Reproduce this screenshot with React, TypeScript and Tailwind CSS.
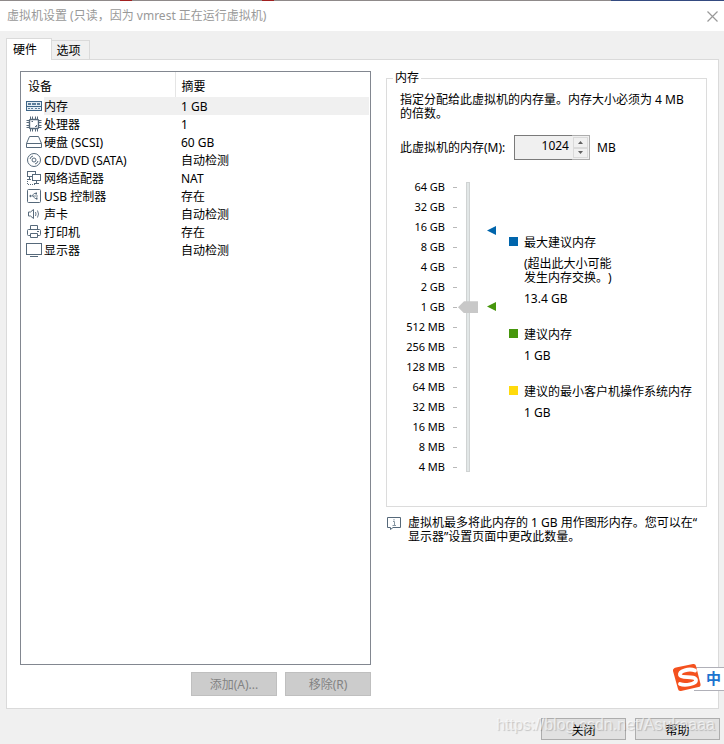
import type { ReactNode } from "react";

const steel = "#56697a";

function Icon({ children }: { children: ReactNode }) {
  return (
    <svg width="16" height="16" viewBox="0 0 16 16" fill="none" stroke={steel} className="block shrink-0" aria-hidden="true">
      {children}
    </svg>
  );
}

const MemoryIcon = () => (
  <Icon>
    <g shapeRendering="crispEdges">
      <rect x="0.5" y="3.5" width="15" height="9" fill="#e4edf4" stroke="#3d6587" />
      <rect x="2" y="5" width="3" height="2" fill="#5d7f9c" stroke="none" />
      <rect x="6" y="5" width="4" height="2" fill="#5d7f9c" stroke="none" />
      <rect x="11" y="5" width="3" height="2" fill="#5d7f9c" stroke="none" />
      <path d="M1 8.5H15" stroke="#3d6587" />
      <path d="M2 10.5H8M9 10.5H14" stroke="#5d7f9c" strokeDasharray="2 1" />
    </g>
  </Icon>
);
const CpuIcon = () => (
  <Icon>
    <rect x="3.5" y="3.5" width="9" height="9" rx="1" strokeWidth="1.4" />
    <path d="M4.5 0.500V3M6.500 0.500V3M9.500 0.500V3M11.500 0.500V3M4.500 13V15.500M6.500 13V15.500M9.500 13V15.500M11.500 13V15.500M0.500 4.500H3M0.500 6.500H3M0.500 9.500H3M0.500 11.500H3M13 4.500H15.500M13 6.500H15.500M13 9.500H15.500M13 11.500H15.500" />
    <path d="M5.500 5.500H7M10.500 9V10.500H9" />
  </Icon>
);
const DiskIcon = () => (
  <Icon>
    <path d="M3.5 2.5H12.5L15.5 9.5V13.5H0.5V9.5ZM0.5 9.5H15.5" />
  </Icon>
);
const DiscIcon = () => (
  <Icon>
    <circle cx="8" cy="8" r="6.5" />
    <circle cx="8" cy="8" r="2" />
    <path d="M4 7A4 4 0 0 1 7 4M12 9A4 4 0 0 1 9 12" />
  </Icon>
);
const NetworkIcon = () => (
  <Icon>
    <g shapeRendering="crispEdges">
      <path d="M6 6.5H1.5V1.5H9.5V4M1 9.5H5M3.5 6.5V9.5" />
      <rect x="6.5" y="4.5" width="8" height="6" />
      <path d="M10.5 11V13M8 13.5H13" />
      <path d="M1.500 11V14.500H9" strokeDasharray="1 1" />
    </g>
  </Icon>
);
const UsbIcon = () => (
  <Icon>
    <rect x="1.5" y="1.5" width="13" height="13" rx="1" />
    <path d="M4 8H12M6 8L8 5.5H10M7 8L9 10.5H10.5" strokeWidth="0.8" />
    <path d="M3 8L5 6.5V9.5Z" fill={steel} stroke="none" />
    <path d="M9.500 4.500H11V6.500H9.500ZM10 9.500H11.500V11.500H10Z" fill={steel} stroke="none" />
  </Icon>
);
const SoundIcon = () => (
  <Icon>
    <path d="M2.500 6H4.500L7.500 3.500V12.500L4.500 10H2.500Z" />
    <path d="M9.5 6Q10.5 8 9.5 10M11.5 4.5Q13.5 8 11.5 11.5" strokeWidth="0.9" />
  </Icon>
);
const PrinterIcon = () => (
  <Icon>
    <path d="M4.5 5.5V1.5H11.5V5.5M4.5 11.5H2.5Q1.5 11.5 1.5 10.5V6.5Q1.5 5.5 2.5 5.5H13.5Q14.5 5.5 14.5 6.5V10.5Q14.5 11.5 13.5 11.5H11.5M4.5 9.5H11.5V13.5H4.5ZM11 7.5H13" />
  </Icon>
);
const DisplayIcon = () => (
  <Icon>
    <path d="M0.5 1.5H15.5V12.5H0.5Z M4 14.5H12" shapeRendering="crispEdges" />
  </Icon>
);

const devices = [
  { icon: <MemoryIcon />, name: "内存", summary: "1 GB" },
  { icon: <CpuIcon />, name: "处理器", summary: "1" },
  { icon: <DiskIcon />, name: "硬盘 (SCSI)", summary: "60 GB" },
  { icon: <DiscIcon />, name: "CD/DVD (SATA)", summary: "自动检测" },
  { icon: <NetworkIcon />, name: "网络适配器", summary: "NAT" },
  { icon: <UsbIcon />, name: "USB 控制器", summary: "存在" },
  { icon: <SoundIcon />, name: "声卡", summary: "自动检测" },
  { icon: <PrinterIcon />, name: "打印机", summary: "存在" },
  { icon: <DisplayIcon />, name: "显示器", summary: "自动检测" },
];

const scale = [
  "64 GB", "32 GB", "16 GB", "8 GB", "4 GB", "2 GB", "1 GB", "512 MB",
  "256 MB", "128 MB", "64 MB", "32 MB", "16 MB", "8 MB", "4 MB",
];

function DeviceTable() {
  return (
    <div className="flex-1 border border-[#828790] bg-white pr-px">
      <table className="w-full table-fixed border-collapse text-left">
        <thead>
          <tr className="h-[25px]">
            <th className="w-[154px] border-r border-[#e5e5e5] pt-1 pl-[7px] font-normal">设备</th>
            <th className="pt-1 pl-1.5 font-normal">摘要</th>
          </tr>
        </thead>
        <tbody>
          {devices.map((d, i) => (
            <tr key={d.name} className={i === 0 ? "h-[18px] bg-[#f0f0f0]" : "h-[18px]"}>
              <td className="p-0">
                <div className="flex h-[18px] items-center">
                  <span className="flex h-[18px] items-center bg-white pr-0.5 pl-[5px]">{d.icon}</span>
                  <span className="pt-0.5 whitespace-nowrap">{d.name}</span>
                </div>
              </td>
              <td className="p-0 pl-1.5">
                <div className="flex h-[18px] items-center pt-0.5">{d.summary}</div>
              </td>
            </tr>
          ))}
        </tbody>
      </table>
    </div>
  );
}

function MemorySlider() {
  return (
    <div className="flex">
      <div className="w-[57px]">
        {scale.map((label) => (
          <div key={label} className="flex h-5 items-center justify-end gap-2 text-[11px]">
            <span className="whitespace-nowrap">{label}</span>
            <span className="h-px w-1 bg-[#b8b8b8]" />
          </div>
        ))}
      </div>
      <input
        type="range"
        aria-label="内存"
        min={0}
        max={14}
        defaultValue={8}
        className="mt-[5px] ml-px h-[290px] w-5 shrink-0 appearance-none bg-[linear-gradient(#e2e7e7,#e2e7e7),linear-gradient(#d0d3d3,#d0d3d3)] bg-[length:2px_288px,4px_290px] bg-center bg-no-repeat [direction:rtl] [writing-mode:vertical-lr] [&::-webkit-slider-thumb]:h-3 [&::-webkit-slider-thumb]:w-5 [&::-webkit-slider-thumb]:appearance-none [&::-webkit-slider-thumb]:bg-[#c8c8c8] [&::-webkit-slider-thumb]:[clip-path:polygon(0_50%,30%_0,100%_0,100%_100%,30%_100%)]"
      />
      <div className="ml-[9px] flex flex-col gap-[67px] pt-[49px]">
        <svg width="9" height="9" viewBox="0 0 9 9" aria-hidden="true"><path d="M0 4.5L9 0V9Z" fill="#0065ac" /></svg>
        <svg width="9" height="9" viewBox="0 0 9 9" aria-hidden="true"><path d="M0 4.5L9 0V9Z" fill="#46960c" /></svg>
      </div>
    </div>
  );
}

function Legend({ swatch, title, children }: { swatch: string; title: string; children: ReactNode }) {
  return (
    <div className="flex gap-1.5">
      <span className={`mt-px size-[9px] shrink-0 ${swatch}`} />
      <div className="flex flex-col gap-[7px] leading-[14px] whitespace-nowrap">
        <p>{title}</p>
        {children}
      </div>
    </div>
  );
}

export default function App() {
  return (
    <div className="relative flex min-h-screen flex-col overflow-hidden bg-[#f0f0f0] font-['Noto_Sans','Noto_Sans_CJK_SC',sans-serif] text-[12px] leading-[14px] text-black [text-spacing-trim:space-all]">
      <div className="flex h-px bg-[#8f8a8a]">
        <span className="ml-[120px] h-px w-3 bg-[#a02020]" />
        <span className="ml-[130px] h-px w-3 bg-[#a02020]" />
        <span className="ml-auto h-px w-[113px] bg-[#344a80]" />
      </div>
      <header className="flex h-[30px] items-center justify-between bg-white pr-[6px] pl-[7px]">
        <h1 className="text-[#999]">虚拟机设置 (只读，因为 vmrest 正在运行虚拟机)</h1>
        <button aria-label="关闭窗口" className="flex size-[11px] items-center">
          <svg width="11" height="11" viewBox="0 0 11 11" stroke="#999" strokeWidth="1.2" aria-hidden="true"><path d="M0.5 0.5L10.5 10.5M10.5 0.5L0.5 10.5" /></svg>
        </button>
      </header>

      <div role="tablist" className="flex items-end pt-[7px] pl-1.5">
        <button role="tab" aria-selected="true" className="z-10 -mb-px h-[22px] w-[46px] border border-b-0 border-[#dadada] bg-white pr-2">硬件</button>
        <button role="tab" aria-selected="false" className="h-[19px] w-[38px] border border-b-0 border-l-0 border-[#dadada] pt-0.5 pr-1">选项</button>
      </div>

      <main className="mr-[5px] ml-1.5 grid flex-1 grid-cols-[351fr_321fr] gap-[15px] border border-[#dadada] bg-white pt-[11px] pr-[11px] pb-3 pl-[13px]">
        <section className="flex flex-col">
          <DeviceTable />
          <div className="flex justify-end gap-2 pt-[7px] text-[#838383]">
            <button disabled className="h-[24px] w-[86px] border border-[#bfbfbf] bg-[#ccc] pt-0.5">添加(A)...</button>
            <button disabled className="h-[24px] w-[86px] border border-[#bfbfbf] bg-[#ccc] pt-0.5">移除(R)</button>
          </div>
        </section>

        <section>
          <fieldset className="border border-[#dcdcdc] pt-2 pr-3 pb-[29px] pl-[13px]">
            <legend className="-ml-[7px] px-0.5">内存</legend>
            <p>指定分配给此虚拟机的内存量。内存大小必须为 4 MB 的倍数。</p>
            <div className="mt-[14px] flex items-center">
              <label htmlFor="memory" className="w-[114px] whitespace-nowrap">此虚拟机的内存(M):</label>
              <div className="flex h-[25px] w-[76px]">
                <input id="memory" readOnly value="1024" className="w-[58px] border border-r-0 border-[#7a7a7a] bg-[#f0f0f0] pr-[3px] pb-1 text-right" />
                <div className="flex flex-1 flex-col border border-l-0 border-[#adadad] bg-[#f0f0f0] p-px">
                  <button aria-label="增加" className="flex flex-1 items-center justify-center border border-[#dadada]">
                    <svg width="5" height="3" viewBox="0 0 5 3" aria-hidden="true"><path d="M0 3L2.5 0L5 3Z" fill="#606060" /></svg>
                  </button>
                  <button aria-label="减少" className="flex flex-1 items-center justify-center border border-[#dadada]">
                    <svg width="5" height="3" viewBox="0 0 5 3" aria-hidden="true"><path d="M0 0L2.5 3L5 0Z" fill="#606060" /></svg>
                  </button>
                </div>
              </div>
              <span className="ml-[7px]">MB</span>
            </div>
            <div className="mt-[17px] flex gap-[13px]">
              <MemorySlider />
              <div className="flex flex-col gap-[22px] pt-[59px]">
                <Legend swatch="bg-[#0065ac]" title="最大建议内存">
                  <p>(超出此大小可能<br />发生内存交换。)</p>
                  <p>13.4 GB</p>
                </Legend>
                <Legend swatch="bg-[#46960c]" title="建议内存"><p>1 GB</p></Legend>
                <Legend swatch="bg-[#ffda0c]" title="建议的最小客户机操作系统内存"><p>1 GB</p></Legend>
              </div>
            </div>
          </fieldset>
          <div className="mt-[9px] flex gap-[7px] pl-px">
            <svg width="14" height="13" viewBox="0 0 14 13" fill="none" stroke={steel} className="mt-px shrink-0" aria-hidden="true">
              <path d="M0.5 0.5H13.5V10.5H6L3.5 12.5V10.5H0.5Z" />
              <path d="M7 2V3.5M6 4.5H7.5V8M5.5 8.5H9" stroke="#8796a2" />
            </svg>
            <p>虚拟机最多将此内存的 1 GB 用作图形内存。您可以在“<br />显示器”设置页面中更改此数量。</p>
          </div>
        </section>
      </main>

      <footer className="flex justify-end gap-[9px] pt-[9px] pr-1 pb-1">
        <button className="h-[22px] w-[85px] border border-[#adadad] bg-[#e1e1e1] pt-1">关闭</button>
        <button className="h-[22px] w-[85px] border border-[#adadad] bg-[#e1e1e1] pt-1">帮助</button>
      </footer>

      <div className="absolute right-0 bottom-[53px] flex h-[24px] w-[30px] items-center justify-end border-y border-[#b0b0b8] bg-white pr-[3px] pb-0.5 font-['Noto_Sans_CJK_SC',sans-serif] text-[15px] font-bold text-[#1d73cf]">中</div>
      <svg width="30" height="30" viewBox="0 0 30 30" className="absolute right-[22px] bottom-[51px]" aria-hidden="true">
        <path d="M4 4.5L21 1Q23.5 0.5 24 3L28.5 21Q29 23.5 26.5 24L9 28Q6.5 28.5 6 26L1 8Q0.5 5.500 4 4.500Z" fill="#f4511e" />
        <path d="M23 7.500C17 5 7 8 8 12C9 16 23 12 24 17C24.500 21 13 23 8 21" fill="none" stroke="#fff" strokeWidth="3.800" strokeLinecap="round" />
      </svg>
      <p className="pointer-events-none absolute right-[9px] bottom-3 font-['Liberation_Sans',sans-serif] text-[16px] text-white/60 [text-shadow:1px_1px_1px_#00000030]">https://blog.csdn.net/Asukaaaa</p>
    </div>
  );
}
